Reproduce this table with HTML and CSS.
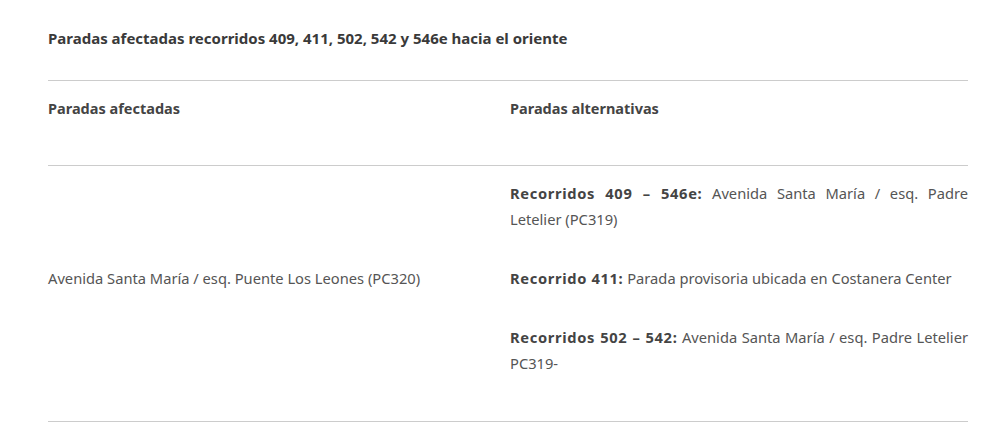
FILE: index.html
```html
<!DOCTYPE html>
<html lang="es">
<head>
<meta charset="utf-8">
<link rel="stylesheet" href="styles.css">
</head>
<body>
<div class="content">
  <h3 class="title">Paradas afectadas recorridos 409, 411, 502, 542 y 546e hacia el oriente</h3>
  <table class="stops">
    <thead>
      <tr>
        <th><p>Paradas afectadas</p></th>
        <th><p>Paradas alternativas</p></th>
      </tr>
    </thead>
    <tbody>
      <tr>
        <td><p>Avenida Santa María / esq. Puente Los Leones (PC320)</p></td>
        <td>
          <p><strong>Recorridos 409 – 546e:</strong> Avenida Santa María / esq. Padre Letelier (PC319)</p>
          <p><strong>Recorrido 411:</strong> Parada provisoria ubicada en Costanera Center</p>
          <p><strong>Recorridos 502 – 542:</strong> Avenida Santa María / esq. Padre Letelier PC319-</p>
        </td>
      </tr>
    </tbody>
  </table>
</div>
</body>
</html>
```

FILE: styles.css
```css
html, body {
  margin: 0;
  padding: 0;
  background: #fff;
}
body {
  font-family: "Noto Sans", "Liberation Sans", sans-serif;
  color: #555;
}
.content {
  padding: 25px 36px 0 48px;
}
.title {
  margin: 0 0 29px;
  font-size: 15px;
  line-height: 26px;
  font-weight: 700;
  color: #3a3a3a;
}
.stops {
  width: 920px;
  border-collapse: collapse;
  table-layout: fixed;
}
.stops th, .stops td {
  border-top: 1px solid #ccc;
  border-bottom: 1px solid #ccc;
  padding: 14px 0 12px;
  vertical-align: middle;
  text-align: left;
}
.stops th {
  padding-bottom: 11px;
}
.stops th:first-child, .stops td:first-child {
  width: 462px;
}
.stops p {
  margin: 0 0 33px;
  font-size: 14.7px;
  line-height: 26px;
}
.stops th p {
  font-size: 14.5px;
  font-weight: 700;
  color: #444;
}
.stops td:last-child p {
  text-align: justify;
}
.stops strong {
  color: #444;
  letter-spacing: 0.65px;
}
```
